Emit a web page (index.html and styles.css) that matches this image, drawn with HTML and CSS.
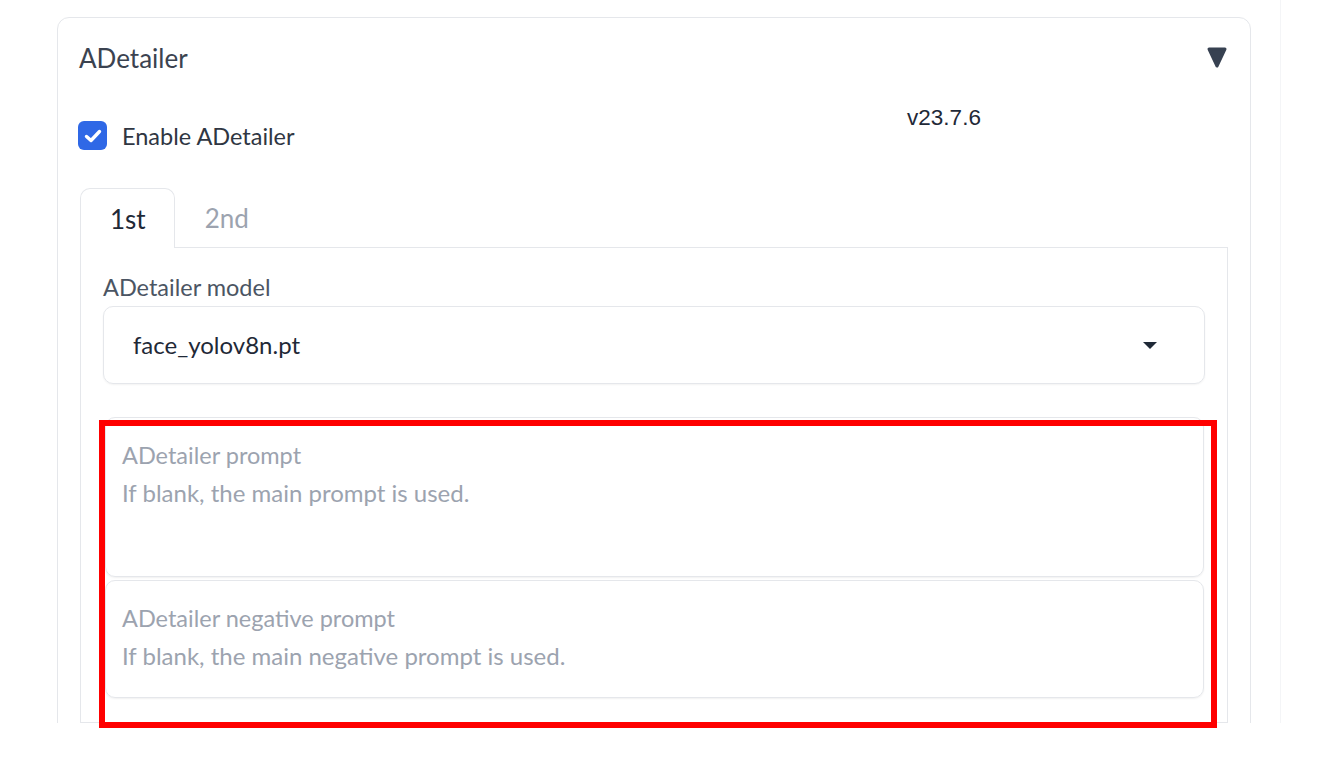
FILE: index.html
```html
<!DOCTYPE html>
<html lang="en">
<head>
<meta charset="utf-8">
<title>ADetailer</title>
<link rel="stylesheet" href="styles.css">
</head>
<body>
<div class="frame">
  <div class="panel">
    <div class="panel-header">
      <span class="panel-title">ADetailer</span>
      <svg class="collapse-icon" width="20" height="21" viewBox="0 0 20 21">
        <polygon points="2,2 18,2 10,19" fill="#374151" stroke="#374151" stroke-width="3" stroke-linejoin="round"/>
      </svg>
    </div>
    <div class="row">
      <div class="check-col">
        <span class="checkbox">
          <svg width="20" height="16" viewBox="0 0 20 16"><path d="M3.5 8.5 L8 12.5 L16.5 3.5" fill="none" stroke="#fff" stroke-width="3.4" stroke-linecap="round" stroke-linejoin="round"/></svg>
        </span>
        <span class="check-label">Enable ADetailer</span>
      </div>
      <div class="version">v23.7.6</div>
    </div>
    <div class="tabs">
      <div class="tab-nav">
        <span class="tab active">1st</span>
        <span class="tab">2nd</span>
      </div>
      <div class="tab-panel">
        <div class="field-label">ADetailer model</div>
        <div class="dropdown">
          <span class="dropdown-value">face_yolov8n.pt</span>
          <svg class="caret" width="16" height="9" viewBox="0 0 16 9"><polygon points="1,1 15,1 8,8" fill="#1f2937"/></svg>
        </div>
        <div class="prompt-group">
          <div class="prompt-box tall">
            <div class="placeholder label-line">ADetailer prompt</div>
            <div class="placeholder">If blank, the main prompt is used.</div>
          </div>
          <div class="prompt-box">
            <div class="placeholder label-line">ADetailer negative prompt</div>
            <div class="placeholder">If blank, the main negative prompt is used.</div>
          </div>
        </div>
      </div>
    </div>
  </div>
</div>
<div class="highlight"></div>
</body>
</html>
```
FILE: styles.css
```css
* { box-sizing: border-box; }

html, body { min-height: 765px; }

body {
  margin: 0;
  background: #ffffff;
  font-family: Lato, "Noto Sans", sans-serif;
  color: #374151;
  position: relative;
}

.frame {
  width: 1281px;
  height: 723px;
  overflow: hidden;
  padding: 17px 29px 0 57px;
  border-right: 1px solid #f4f5f7;
}

.panel {
  border: 1px solid #e5e7eb;
  border-radius: 12px;
  padding: 0 22px 0 22px;
  min-height: 900px;
  background: #fff;
}

.panel-header {
  height: 80px;
  display: flex;
  align-items: center;
  justify-content: space-between;
}

.panel-title {
  font-size: 26px;
  color: #3b4350;
  margin-left: -1px;
}

.collapse-icon { margin-top: -2px; margin-right: 1px; }

.row {
  display: grid;
  grid-template-columns: 1fr 1fr;
  gap: 16px;
  margin-top: 8px;
  align-items: start;
}

.check-col {
  display: flex;
  align-items: center;
  gap: 15px;
  padding-top: 15px;
  margin-left: -2px;
}

.checkbox {
  width: 29px;
  height: 29px;
  border-radius: 6px;
  background: #2f68e6;
  display: flex;
  align-items: center;
  justify-content: center;
}

.check-label {
  font-size: 23.5px;
  color: #2f3642;
}

.version {
  text-align: center;
  font-family: "Liberation Sans", Arial, sans-serif;
  font-size: 22.5px;
  line-height: 24px;
  color: #1f2937;
  padding-right: 2px;
}

.tabs { margin-top: 38px; }

.tab-nav {
  display: flex;
  border-bottom: 1px solid #e5e7eb;
}

.tab {
  height: 59px;
  padding: 0 29px;
  display: flex;
  align-items: center;
  font-size: 26px;
  color: #9ca3af;
  border: 1px solid transparent;
  border-bottom: none;
}

.tab.active {
  color: #1f2937;
  border-color: #e5e7eb;
  border-radius: 10px 10px 0 0;
  background: #fff;
  margin-bottom: -1px;
  height: 60px;
  padding-right: 28px;
}

.tab-panel {
  border: 1px solid #e5e7eb;
  border-top: none;
  padding: 24px 22px 24px 22px;
}

.field-label {
  font-size: 23.5px;
  line-height: 30px;
  color: #4b5563;
  margin-bottom: 4px;
}

.dropdown {
  height: 78px;
  border: 1px solid #e5e7eb;
  border-radius: 10px;
  box-shadow: 0 1px 2px rgba(0, 0, 0, 0.05);
  display: flex;
  align-items: center;
  justify-content: space-between;
  padding: 0 46px 0 29px;
}

.dropdown-value {
  font-size: 24px;
  color: #1f2937;
  margin-top: -2px;
}

.prompt-group {
  margin: 33px 1px 0 2px;
  display: flex;
  flex-direction: column;
  gap: 3px;
}

.prompt-box {
  height: 118px;
  border: 1px solid #e5e7eb;
  border-radius: 10px;
  box-shadow: 0 1px 2px rgba(0, 0, 0, 0.06);
  padding: 18px 16px;
}

.prompt-box.tall { height: 160px; }

.placeholder {
  font-size: 24px;
  line-height: 38px;
  color: #9ca3af;
}

.placeholder.label-line { font-size: 23.5px; }

.highlight {
  position: absolute;
  left: 99px;
  top: 420px;
  width: 1118px;
  height: 308px;
  border: 6px solid #ff0000;
}
```
